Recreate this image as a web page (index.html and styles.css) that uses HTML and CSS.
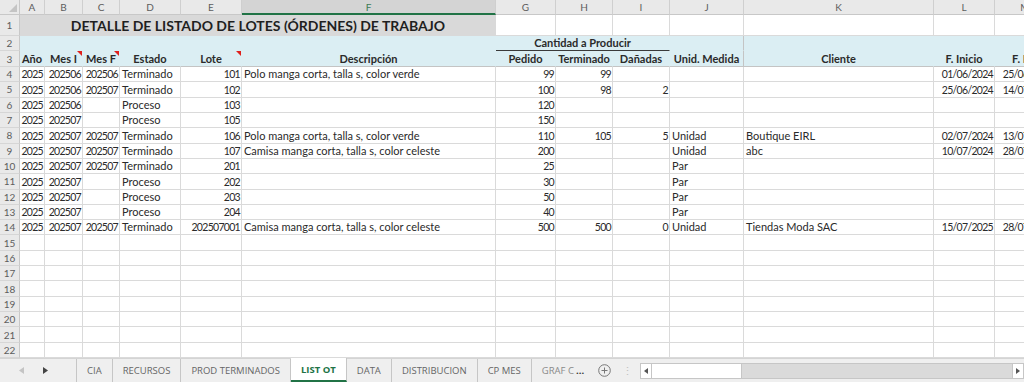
FILE: index.html
```html
<!DOCTYPE html>
<html>

<head>
    <meta charset='utf-8'>
    <title>LIST OT</title>
    <meta name='viewport' content='width=device-width, initial-scale=1'>
    <link rel="stylesheet" href="styles.css">
</head>

<body>
    <div class="sheet" id="sheet"></div>

    <div class="tabbar">
        <div class="nav">
            <svg width="5" height="7" viewBox="0 0 5 7"><polygon points="5,0 0,3.5 5,7" fill="#c4c4c4"/></svg>
            <svg width="5" height="7" viewBox="0 0 5 7"><polygon points="0,0 5,3.5 0,7" fill="#444"/></svg>
        </div>
        <div class="tab first">CIA</div>
        <div class="tab">RECURSOS</div>
        <div class="tab">PROD TERMINADOS</div>
        <div class="tab active">LIST OT</div>
        <div class="tab">DATA</div>
        <div class="tab">DISTRIBUCION</div>
        <div class="tab">CP MES</div>
        <div class="tab more">GRAF C <span class="dots">...</span></div>
        <div class="add">
            <svg width="13" height="13" viewBox="0 0 13 13">
                <circle cx="6.5" cy="6.5" r="5.8" fill="none" stroke="#777" stroke-width="1"/>
                <path d="M6.5 3.5v6M3.5 6.5h6" stroke="#777" stroke-width="1"/>
            </svg>
        </div>
        <div class="grip">&#8942;</div>
        <div class="hscroll">
            <div class="sbtn">
                <svg width="4" height="6" viewBox="0 0 4 6"><polygon points="4,0 0,3 4,6" fill="#555"/></svg>
            </div>
            <div class="thumb"></div>
            <div class="track"></div>
            <div class="sbtn right">
                <svg width="4" height="6" viewBox="0 0 4 6"><polygon points="0,0 4,3 0,6" fill="#555"/></svg>
            </div>
        </div>
    </div>

    <script>
        var letters = ['A','B','C','D','E','F','G','H','I','J','K','L','M'];
        var align = 'rrrlrlrrrllrr';
        var heads = ['Año','Mes I','Mes F','Estado','Lote','Descripción','Pedido','Terminado','Dañadas','Unid. Medida','Cliente','F. Inicio','F. Fin'];
        var notes = [1, 2, 4]; // celdas con comentario
        var data = [
            ['2025','202506','202506','Terminado','101','Polo manga corta, talla s, color verde','99','99','','','','01/06/2024','25/06/2024'],
            ['2025','202506','202507','Terminado','102','','100','98','2','','','25/06/2024','14/07/2024'],
            ['2025','202506','','Proceso','103','','120','','','','','',''],
            ['2025','202507','','Proceso','105','','150','','','','','',''],
            ['2025','202507','202507','Terminado','106','Polo manga corta, talla s, color verde','110','105','5','Unidad','Boutique EIRL','02/07/2024','13/07/2024'],
            ['2025','202507','202507','Terminado','107','Camisa manga corta, talla s, color celeste','200','','','Unidad','abc','10/07/2024','28/07/2024'],
            ['2025','202507','202507','Terminado','201','','25','','','Par','','',''],
            ['2025','202507','','Proceso','202','','30','','','Par','','',''],
            ['2025','202507','','Proceso','203','','50','','','Par','','',''],
            ['2025','202507','','Proceso','204','','40','','','Par','','',''],
            ['2025','202507','202507','Terminado','202507001','Camisa manga corta, talla s, color celeste','500','500','0','Unidad','Tiendas Moda SAC','15/07/2025','28/07/2025']
        ];

        var sheet = document.querySelector('#sheet');

        function cell(cls, txt){
            var d = document.createElement('div');
            d.className = 'cell ' + cls;
            d.textContent = txt || '';
            sheet.appendChild(d);
            return d;
        }

        // encabezado de columnas
        cell('corner');
        letters.forEach(function(l){
            cell('colhdr' + (l == 'F' ? ' sel' : ''), l);
        });

        // fila 1: titulo
        cell('rowhdr', '1');
        cell('title', 'DETALLE DE LISTADO DE LOTES (ÓRDENES) DE TRABAJO');
        for(var i = 6; i < 13; i++) cell('');

        // fila 2
        cell('rowhdr', '2');
        cell('band wide');
        cell('band group', 'Cantidad a Producir');
        cell('band edge');
        cell('band'); cell('band'); cell('band');

        // fila 3
        cell('rowhdr', '3');
        heads.forEach(function(h, i){
            var c = cell('band hd' + (i == 9 ? ' edge' : ''), h);
            if(notes.indexOf(i) > -1) c.classList.add('note');
        });

        // filas de datos
        for(var r = 0; r < 19; r++){
            cell('rowhdr', r + 4);
            var row = data[r] || [];
            for(var c = 0; c < 13; c++){
                cell(align[c] == 'r' ? 'num' : '', row[c]);
            }
        }
    </script>
</body>

</html>
```

FILE: styles.css
```css
* {
    margin: 0;
    padding: 0;
    box-sizing: border-box;
}

body {
    width: 1024px;
    height: 382px;
    overflow: hidden;
    background-color: white;
    font-family: Lato, "Liberation Sans", sans-serif;
}

.sheet {
    display: grid;
    grid-template-columns: 20px 25px 38px 37px 61px 61px 254px 60px 57px 57px 74px 190px 61px 61px;
    grid-template-rows: 15px 21px 15px 16px repeat(19, 1fr);
    width: 1056px;
    height: 358px;
}

.cell {
    position: relative;
    display: flex;
    align-items: flex-end;
    padding: 0 2px;
    border-right: 1px solid #dadada;
    border-bottom: 1px solid #dadada;
    font-size: 11px;
    line-height: 14px;
    color: #2a2a2a;
    white-space: nowrap;
    overflow: hidden;
}

.num {
    justify-content: flex-end;
    padding: 0 1px;
    font-size: 10.5px;
    letter-spacing: -0.7px;
}

.corner {
    background-color: #e9e9e9;
    border-right-color: #c8c8c8;
    border-bottom-color: #c8c8c8;
    justify-content: flex-end;
}

.corner::after {
    content: '';
    position: absolute;
    right: 2px;
    bottom: 2px;
    border-left: 8px solid transparent;
    border-bottom: 8px solid #c4c4c4;
}

.colhdr {
    justify-content: center;
    align-items: center;
    background-color: #e9e9e9;
    border-right-color: #cfcfcf;
    border-bottom-color: #c8c8c8;
    font-size: 10px;
    color: #5d5d5d;
}

.colhdr.sel {
    background-color: #d4d4d4;
    border-bottom: 2px solid #217346;
    color: #3d7b55;
}

.rowhdr {
    justify-content: center;
    align-items: center;
    padding: 0;
    background-color: #e9e9e9;
    border-right-color: #c8c8c8;
    border-bottom-color: #d6d6d6;
    font-size: 10px;
    color: #5d5d5d;
}

.title {
    grid-column: span 6;
    justify-content: center;
    align-items: center;
    background-color: #d9d9d9;
    border-right: none;
    border-bottom: none;
    font-size: 14px;
    font-weight: bold;
    color: #1f1f1f;
}

.band {
    background-color: #dbeef3;
    border-right-color: transparent;
    border-bottom-color: transparent;
}

.band.wide {
    grid-column: span 6;
}

.band.group {
    grid-column: span 3;
    justify-content: center;
    border-bottom: 1px solid #3a3a3a;
    font-weight: bold;
}

.band.edge {
    border-right-color: #c4c4c4;
}

.band.hd {
    justify-content: center;
    border-bottom-color: #c4c4c4;
    font-weight: bold;
}

.note::after {
    content: '';
    position: absolute;
    top: 0;
    right: 0;
    border-left: 5px solid transparent;
    border-top: 5px solid #e0201c;
}

/* barra de hojas */
.tabbar {
    display: flex;
    align-items: stretch;
    height: 24px;
    background-color: #efefef;
    border-top: 1px solid #d4d4d4;
    font-family: "Open Sans", "Liberation Sans", sans-serif;
}

.nav {
    display: flex;
    align-items: center;
    gap: 19px;
    width: 76px;
    padding-left: 19px;
}

.tab {
    display: flex;
    align-items: center;
    padding: 0 10px;
    border-right: 1px solid #c6c6c6;
    font-size: 9.5px;
    color: #666;
    white-space: nowrap;
}

.tab.first {
    border-left: 1px solid #c6c6c6;
}

.tab.active {
    margin-top: -1px;
    background-color: white;
    border-bottom: 2px solid #217346;
    font-weight: bold;
    color: #217346;
}

.tab.more {
    border-right: none;
    color: #8a8a8a;
}

.dots {
    margin-left: 2px;
    font-weight: bold;
    color: #333;
}

.add {
    display: flex;
    align-items: center;
    padding: 0 4px;
}

.grip {
    display: flex;
    align-items: center;
    width: 25px;
    justify-content: center;
    font-size: 11px;
    color: #c0c0c0;
}

.hscroll {
    display: flex;
    flex: 1;
    align-self: center;
    height: 16px;
    border: 1px solid #c6c6c6;
    background-color: #dadada;
}

.sbtn {
    display: flex;
    align-items: center;
    justify-content: center;
    width: 11px;
    background-color: white;
    border-right: 1px solid #c6c6c6;
}

.sbtn.right {
    border-right: none;
    border-left: 1px solid #c6c6c6;
}

.thumb {
    width: 90px;
    background-color: white;
    border-right: 1px solid #c6c6c6;
}

.track {
    flex: 1;
}
```
